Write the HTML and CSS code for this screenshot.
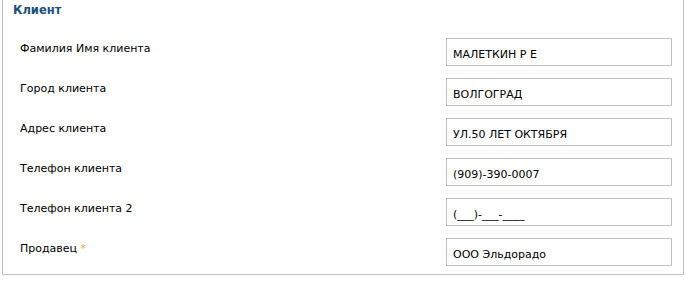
FILE: index.html
```html
<!DOCTYPE html>
<html>
<head>
<meta charset="utf-8">
<link rel="stylesheet" href="styles.css">
</head>
<body>
<div class="panel">
  <div class="title">Клиент</div>
  <div class="rows">
    <div class="row"><div class="label">Фамилия Имя клиента</div><div class="input">МАЛЕТКИН Р Е</div></div>
    <div class="row"><div class="label">Город клиента</div><div class="input">ВОЛГОГРАД</div></div>
    <div class="row"><div class="label">Адрес клиента</div><div class="input">УЛ.50 ЛЕТ ОКТЯБРЯ</div></div>
    <div class="row"><div class="label">Телефон клиента</div><div class="input">(909)-390-0007</div></div>
    <div class="row"><div class="label">Телефон клиента 2</div><div class="input">(___)-___-____</div></div>
    <div class="row"><div class="label">Продавец <span class="req">*</span></div><div class="input">ООО Эльдорадо</div></div>
  </div>
</div>
</body>
</html>
```
FILE: styles.css
```css
html, body { margin: 0; padding: 0; background: #fff; }
body { font-family: "DejaVu Sans", Verdana, sans-serif; font-size: 11px; color: #000; }
.panel {
  margin-left: 2px;
  width: 680px;
  height: 274px;
  border: 1px solid #c0c0c0;
  border-top: none;
  box-sizing: content-box;
}
.title {
  padding: 3px 0 0 10px;
  height: 18px;
  font-weight: bold;
  font-size: 11.5px;
  color: #1d4f7c;
}
.rows { display: flex; flex-direction: column; gap: 12px; padding-top: 17px; }
.row { display: flex; align-items: flex-start; height: 28px; }
.label { flex: 1; padding: 4px 0 0 17px; }
.req { color: #f5a142; font-size: 11px; vertical-align: top; }
.input {
  width: 218px;
  height: 21px;
  border: 1px solid #c0c0c0;
  margin-right: 11px;
  padding: 5px 0 0 6px;
  box-sizing: content-box;
  line-height: 21px;
}
```
